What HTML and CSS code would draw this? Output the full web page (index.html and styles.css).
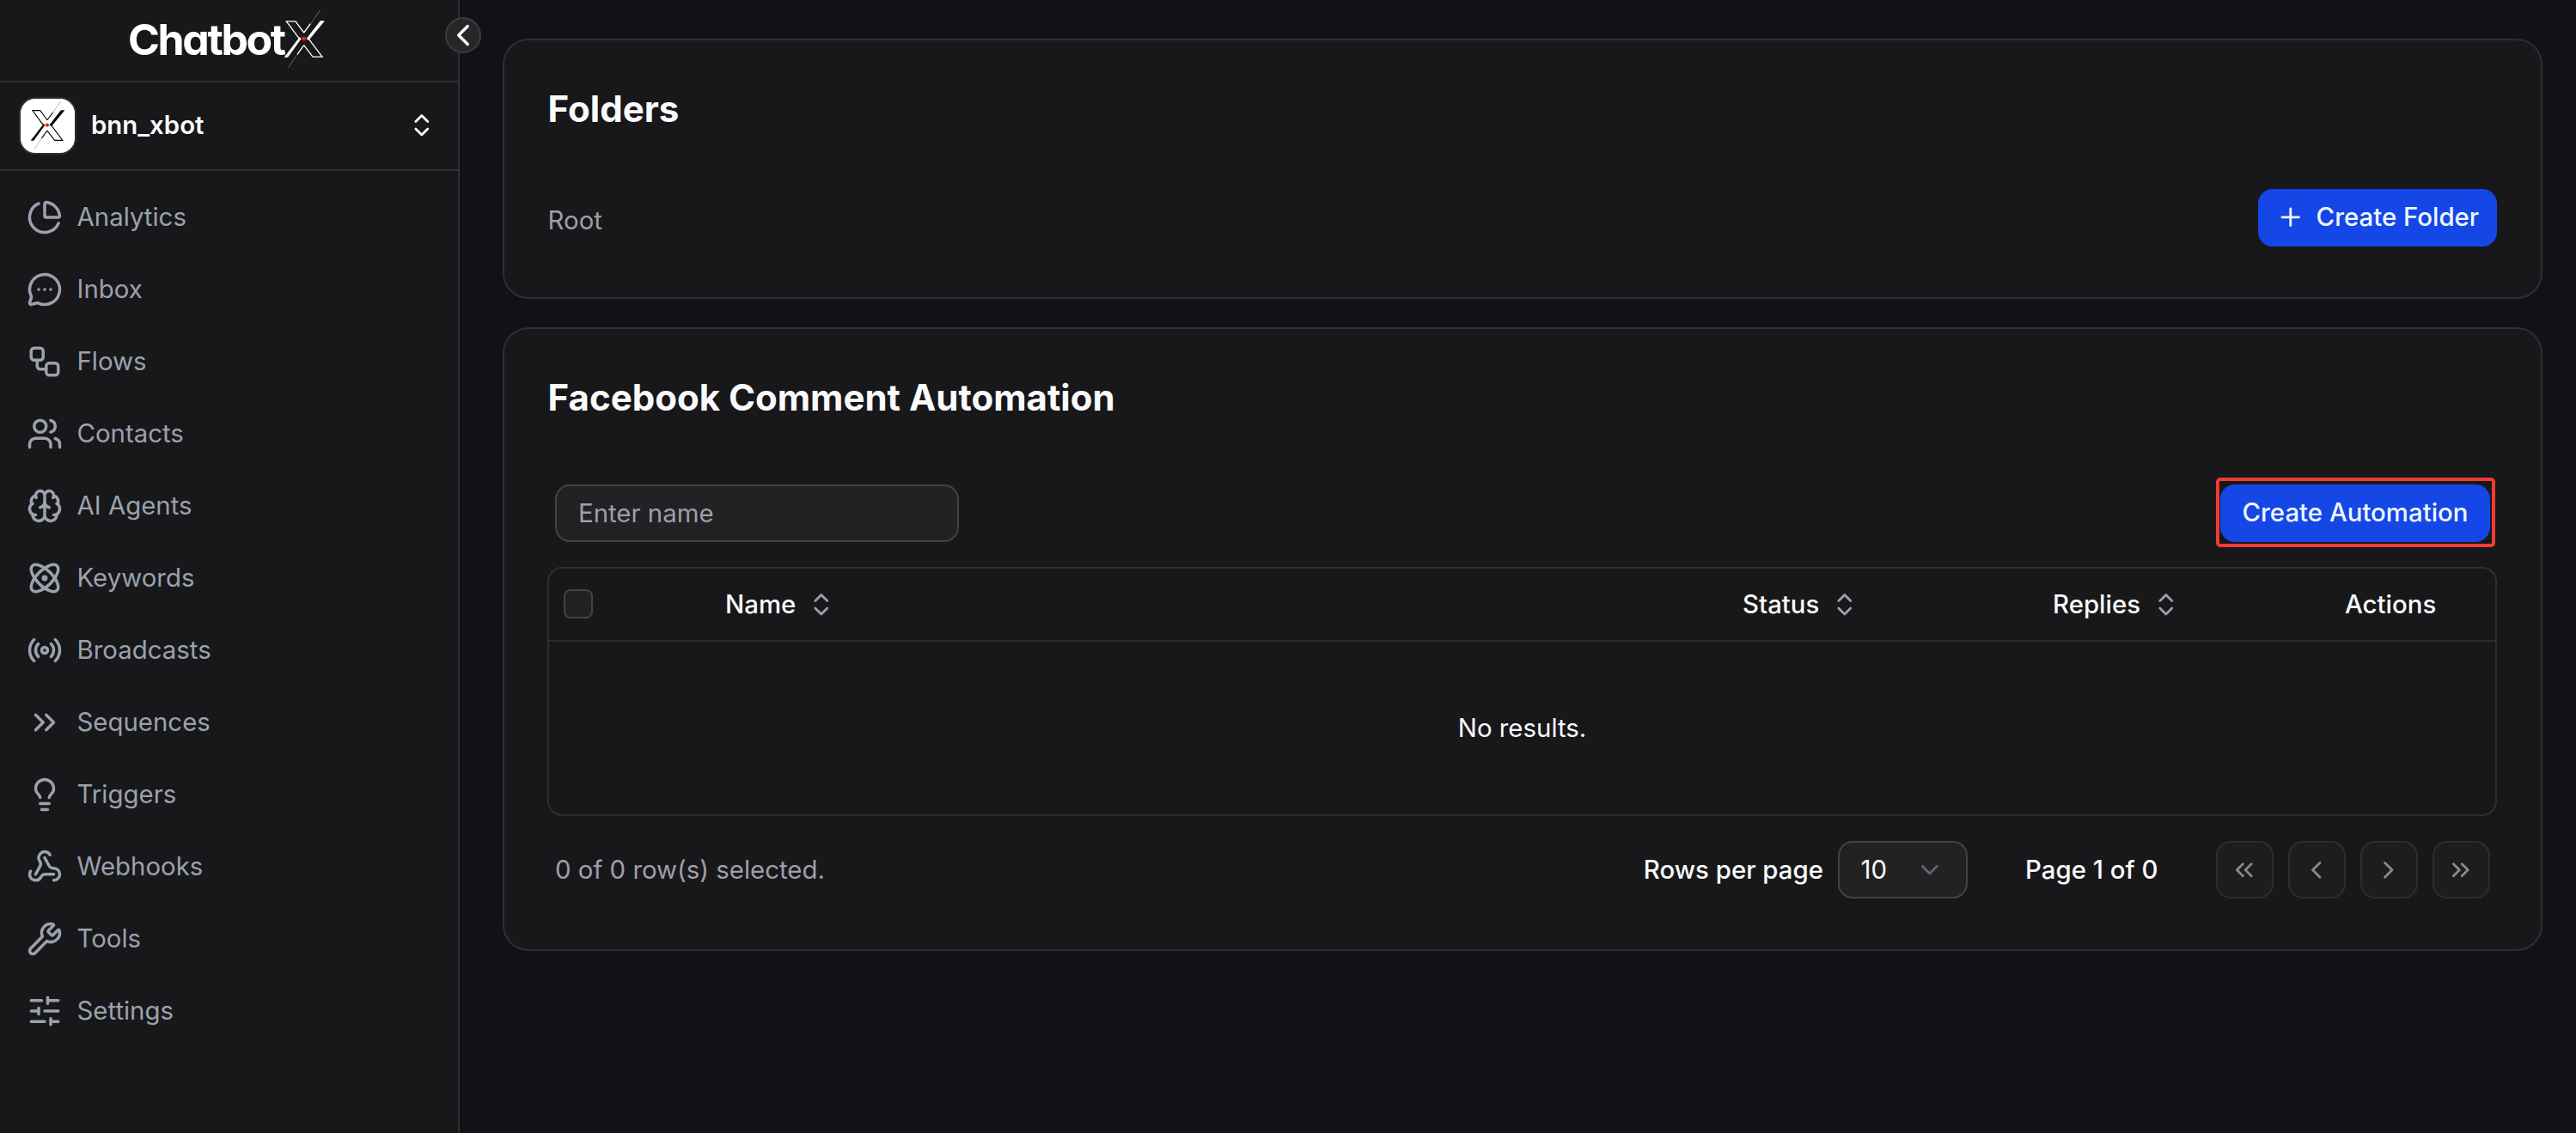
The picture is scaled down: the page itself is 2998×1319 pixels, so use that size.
FILE: index.html
```html
<!DOCTYPE html>
<html lang="en">
<head>
<meta charset="utf-8">
<title>ChatbotX - Facebook Comment Automation</title>
<link rel="stylesheet" href="styles.css">
</head>
<body>
<svg class="defs" aria-hidden="true">
  <symbol id="sort" viewBox="0 0 24 24"><path d="m7 15 5 5 5-5"/><path d="m7 9 5-5 5 5"/></symbol>
  <symbol id="x-mark" viewBox="570 30 146 205">
    <path class="x-thin" d="M624 131 580 71.500H612L641 111M658 133 705 195.500H672L641 155"/>
    <path class="x-thin" d="M641 111 664 80M641 155 618 187"/>
    <path class="x-hair" d="M698 33 641 112M641 154 587 232"/>
    <path class="x-bold" d="M698 70H714L662 133 658 138 650 132ZM572 197H585L632 132 626 126 621 133Z"/>
    <circle class="x-dot" cx="641" cy="132" r="7.500"/>
  </symbol>
</svg>
<div class="app">
  <aside class="sidebar">
    <div class="brand"><span class="brand-name">Chatbot</span><svg class="brand-x"><use href="#x-mark"/></svg></div>
    <div class="workspace">
      <span class="avatar"><svg class="avatar-x"><use href="#x-mark"/></svg></span>
      <span class="workspace-name">bnn_xbot</span>
      <svg class="icon icon-sm"><use href="#sort"/></svg>
    </div>
    <nav class="nav">
      <a class="nav-item"><svg class="icon" viewBox="0 0 24 24"><path d="M21 12c.552 0 1.005-.449.950-.998a10 10 0 0 0-8.953-8.951c-.550-.055-.998.398-.998.950v8a1 1 0 0 0 1 1z"/><path d="M21.210 15.890A10 10 0 1 1 8 2.830"/></svg>Analytics</a>
      <a class="nav-item"><svg class="icon" viewBox="0 0 24 24"><path d="M2.992 16.342a2 2 0 0 1 .094 1.167l-1.065 3.290a1 1 0 0 0 1.236 1.168l3.413-.998a2 2 0 0 1 1.099.092 10 10 0 1 0-4.777-4.719"/><path d="M8 12h.01M12 12h.01M16 12h.01"/></svg>Inbox</a>
      <a class="nav-item"><svg class="icon" viewBox="0 0 24 24"><rect width="8" height="8" x="3" y="3" rx="2"/><path d="M7 11v4a2 2 0 0 0 2 2h4"/><rect width="8" height="8" x="13" y="13" rx="2"/></svg>Flows</a>
      <a class="nav-item"><svg class="icon" viewBox="0 0 24 24"><path d="M16 21v-2a4 4 0 0 0-4-4H6a4 4 0 0 0-4 4v2M16 3.128a4 4 0 0 1 0 7.744M22 21v-2a4 4 0 0 0-3-3.870"/><circle cx="9" cy="7" r="4"/></svg>Contacts</a>
      <a class="nav-item"><svg class="icon" viewBox="0 0 24 24"><path d="M12 18V5M15 13a4.170 4.170 0 0 1-3-4 4.170 4.170 0 0 1-3 4M17.598 6.500A3 3 0 1 0 12 5a3 3 0 1 0-5.598 1.500M17.997 5.125a4 4 0 0 1 2.526 5.770M18 18a4 4 0 0 0 2-7.464M19.967 17.483A4 4 0 1 1 12 18a4 4 0 1 1-7.967-.517M6 18a4 4 0 0 1-2-7.464M6.003 5.125a4 4 0 0 0-2.526 5.770"/></svg>AI Agents</a>
      <a class="nav-item"><svg class="icon" viewBox="0 0 24 24"><circle cx="12" cy="12" r="1"/><path d="M20.200 20.200c2.040-2.030.020-7.360-4.500-11.900-4.540-4.520-9.870-6.540-11.900-4.500-2.040 2.030-.020 7.360 4.500 11.900 4.540 4.520 9.870 6.540 11.900 4.500Z"/><path d="M15.700 15.700c4.520-4.540 6.540-9.870 4.500-11.900-2.030-2.040-7.360-.020-11.900 4.500-4.520 4.540-6.540 9.870-4.500 11.900 2.030 2.040 7.360.020 11.900-4.500Z"/></svg>Keywords</a>
      <a class="nav-item"><svg class="icon" viewBox="0 0 24 24"><path d="M16.247 7.761a6 6 0 0 1 0 8.478M19.075 4.933a10 10 0 0 1 0 14.134M4.925 19.067a10 10 0 0 1 0-14.134M7.753 16.239a6 6 0 0 1 0-8.478"/><circle cx="12" cy="12" r="2"/></svg>Broadcasts</a>
      <a class="nav-item"><svg class="icon" viewBox="0 0 24 24"><path d="m6 17 5-5-5-5M13 17l5-5-5-5"/></svg>Sequences</a>
      <a class="nav-item"><svg class="icon" viewBox="0 0 24 24"><path d="M15 14c.200-1 .700-1.700 1.500-2.500 1-.900 1.500-2.200 1.500-3.500A6 6 0 0 0 6 8c0 1 .200 2.200 1.500 3.500.700.700 1.300 1.500 1.500 2.500M9 18h6M10 22h4"/></svg>Triggers</a>
      <a class="nav-item"><svg class="icon" viewBox="0 0 24 24"><path d="M18 16.980h-5.990c-1.100 0-1.950.940-2.480 1.900A4 4 0 0 1 2 17c.010-.700.200-1.400.570-2"/><path d="m6 17 3.130-5.780c.530-.970.100-2.180-.500-3.100a4 4 0 1 1 6.890-4.060"/><path d="m12 6 3.130 5.730C15.660 12.700 16.900 13 18 13a4 4 0 0 1 0 8"/></svg>Webhooks</a>
      <a class="nav-item"><svg class="icon" viewBox="0 0 24 24"><path d="M14.700 6.300a1 1 0 0 0 0 1.400l1.600 1.600a1 1 0 0 0 1.400 0l3.106-3.105c.320-.322.863-.220.983.218a6 6 0 0 1-8.259 7.057l-7.910 7.910a1 1 0 0 1-2.999-3l7.910-7.910a6 6 0 0 1 7.057-8.259c.438.120.540.662.219.984z"/></svg>Tools</a>
      <a class="nav-item"><svg class="icon" viewBox="0 0 24 24"><path d="M10 5H3M12 19H3M14 3v4M16 17v4M21 12h-9M21 19h-5M21 5h-7M8 10v4M8 12H3"/></svg>Settings</a>
    </nav>
    <button class="collapse" aria-label="Collapse sidebar"><svg class="icon" viewBox="0 0 24 24"><path d="m15 18-6-6 6-6"/></svg></button>
  </aside>
  <main class="main">
    <section class="card">
      <h2 class="card-title">Folders</h2>
      <div class="folder-row">
        <span class="crumb">Root</span>
        <button class="btn btn-folder"><svg class="icon icon-sm" viewBox="0 0 24 24"><path d="M5 12h14M12 5v14"/></svg>Create Folder</button>
      </div>
    </section>
    <section class="card">
      <h2 class="card-title">Facebook Comment Automation</h2>
      <div class="toolbar">
        <input class="search" type="text" placeholder="Enter name">
        <span class="highlight-anchor"><button class="btn btn-automation">Create Automation</button><span class="highlight"></span></span>
      </div>
      <div class="table">
        <div class="table-head">
          <span class="checkbox"></span>
          <span class="th">Name<svg class="icon icon-sm"><use href="#sort"/></svg></span>
          <span class="th">Status<svg class="icon icon-sm"><use href="#sort"/></svg></span>
          <span class="th">Replies<svg class="icon icon-sm"><use href="#sort"/></svg></span>
          <span class="th th-plain">Actions</span>
        </div>
        <div class="empty">No results.</div>
      </div>
      <div class="footer">
        <span class="selected">0 of 0 row(s) selected.</span>
        <span class="label">Rows per page</span>
        <button class="select">10<svg class="icon icon-sm" viewBox="0 0 24 24"><path d="m6 9 6 6 6-6"/></svg></button>
        <span class="label page-label">Page 1 of 0</span>
        <div class="pager">
          <button class="page-btn" aria-label="First page"><svg class="icon icon-sm" viewBox="0 0 24 24"><path d="m11 17-5-5 5-5M18 17l-5-5 5-5"/></svg></button>
          <button class="page-btn" aria-label="Previous page"><svg class="icon icon-sm" viewBox="0 0 24 24"><path d="m15 18-6-6 6-6"/></svg></button>
          <button class="page-btn" aria-label="Next page"><svg class="icon icon-sm" viewBox="0 0 24 24"><path d="m9 18 6-6-6-6"/></svg></button>
          <button class="page-btn" aria-label="Last page"><svg class="icon icon-sm" viewBox="0 0 24 24"><path d="m6 17 5-5-5-5M13 17l5-5-5-5"/></svg></button>
        </div>
      </div>
    </section>
  </main>
</div>
</body>
</html>
```
FILE: styles.css
```css
* { box-sizing: border-box; }

body {
  margin: 0;
  background: #111217;
  color: #fafafa;
  font-family: Inter, "Liberation Sans", sans-serif;
  font-size: 29.4px;
  line-height: 42px;
}

button, input { font: inherit; color: inherit; margin: 0; }

.defs { display: none; }

.app { display: flex; height: 1319px; overflow: hidden; }

.icon {
  width: 42px;
  height: 42px;
  flex: none;
  fill: none;
  stroke: currentColor;
  stroke-width: 2;
  stroke-linecap: round;
  stroke-linejoin: round;
}
.icon-sm { width: 33.6px; height: 33.6px; }

/* Sidebar */
.sidebar {
  position: relative;
  width: 535px;
  flex: none;
  background: #18181b;
  border-right: 2px solid #2f2f31;
}

.brand {
  display: flex;
  height: 96px;
  padding: 11px 0 0 149px;
  border-bottom: 2px solid #2f2f31;
}
.brand-name {
  width: 181px;
  padding-top: 17px;
  font-size: 50px;
  line-height: 36px;
  font-weight: 700;
  letter-spacing: -2.4px;
  font-feature-settings: "cv11";
  color: #fff;
}
.brand-x { width: 48.7px; height: 68.3px; color: #fff; }

.x-thin { fill: none; stroke: currentColor; stroke-width: 4; }
.x-hair { fill: none; stroke: currentColor; stroke-width: 2; opacity: .5; }
.x-bold { fill: currentColor; }
.x-dot { fill: #fb1a05; }

.workspace {
  display: flex;
  align-items: center;
  height: 103px;
  padding: 0 25px 2px 22px;
  border-bottom: 2px solid #2f2f31;
}
.avatar {
  display: flex;
  align-items: center;
  justify-content: center;
  width: 67px;
  height: 67px;
  margin-top: 1px;
  border: 2px solid #2f2f31;
  border-radius: 19px;
  background: #fff;
}
.avatar-x { width: 41px; height: 57.5px; color: #0a0a0a; }
.workspace-name { flex: 1; margin-left: 17px; font-weight: 600; }

.nav { padding-top: 12px; color: #9ba1ae; }
.nav-item {
  display: flex;
  align-items: center;
  gap: 16.5px;
  height: 84px;
  padding-left: 31px;
}

.collapse {
  position: absolute;
  top: 20px;
  right: -27px;
  display: flex;
  align-items: center;
  justify-content: center;
  width: 42px;
  height: 42px;
  padding: 0;
  border: 2px solid #3e3e42;
  border-radius: 50%;
  background: #27272a;
}

/* Content */
.main {
  flex: 1;
  display: flex;
  flex-direction: column;
  gap: 33px;
  padding: 45px 39px 0 50px;
}
.card {
  padding: 59px 51px 59px 50px;
  border: 2px solid #2f2f31;
  border-radius: 30px;
  background: #18181b;
}
.card-title { margin: 0 0 0 .6px; font-size: 42px; line-height: 42px; font-weight: 700; }

.folder-row {
  display: flex;
  align-items: center;
  justify-content: space-between;
  height: 67px;
  margin-top: 72px;
}
.crumb { padding: 6px 0 0 .6px; color: #9f9fa9; }

.btn {
  display: flex;
  align-items: center;
  height: 67px;
  border: 0;
  border-radius: 17px;
  background: #1447e6;
  color: #eff6ff;
  font-weight: 500;
}
.btn-folder { width: 278px; padding: 0 0 1px 21px; gap: 13px; }
.btn-automation { width: 314px; padding: 0 0 1px; justify-content: center; }

.toolbar {
  display: flex;
  justify-content: space-between;
  margin-top: 80px;
  padding: 0 8px 0 9px;
}
.search {
  width: 470px;
  height: 67px;
  padding: 0 25px;
  border: 2px solid #434345;
  border-radius: 17px;
  background: #222225;
}
.search::placeholder { color: #9f9fa9; opacity: 1; }
.highlight-anchor { position: relative; }
.highlight {
  position: absolute;
  inset: -8px -6px -6px -5px;
  border: 4px solid #f23a36;
  border-radius: 5px;
}

.table {
  margin-top: 29px;
  height: 290px;
  border: 2px solid #2f2f31;
  border-radius: 17px;
}
.table-head {
  display: grid;
  grid-template-columns: 205px 1184px 361px 340px 1fr;
  align-items: center;
  height: 85px;
  border-bottom: 2px solid #2f2f31;
  font-weight: 500;
}
.checkbox {
  width: 34px;
  height: 34px;
  margin: 0 0 1px 17px;
  border: 2px solid #434345;
  border-radius: 8px;
  background: #222225;
}
.th { display: flex; align-items: center; gap: 13px; }
.th .icon { color: #9f9fa9; }
.empty { line-height: 201px; text-align: center; }

.footer {
  display: flex;
  align-items: center;
  margin-top: 29px;
  padding: 0 8px 0 9px;
}
.selected { flex: 1; color: #9f9fa9; }
.label { font-weight: 500; }
.select {
  display: flex;
  align-items: center;
  justify-content: space-between;
  width: 151px;
  height: 67px;
  margin-left: 17px;
  padding: 0 25px 0 24.500px;
  border: 2px solid #434345;
  border-radius: 17px;
  background: #222225;
}
.select .icon { color: #65656b; }
.page-label { width: 222px; margin-left: 67px; }
.pager { display: flex; gap: 17px; }
.page-btn {
  display: flex;
  align-items: center;
  justify-content: center;
  width: 67px;
  height: 67px;
  padding: 0 1px 0 0;
  border: 2px solid #2d2d30;
  border-radius: 17px;
  background: #1d1d20;
  color: #8a8a8c;
}
```
